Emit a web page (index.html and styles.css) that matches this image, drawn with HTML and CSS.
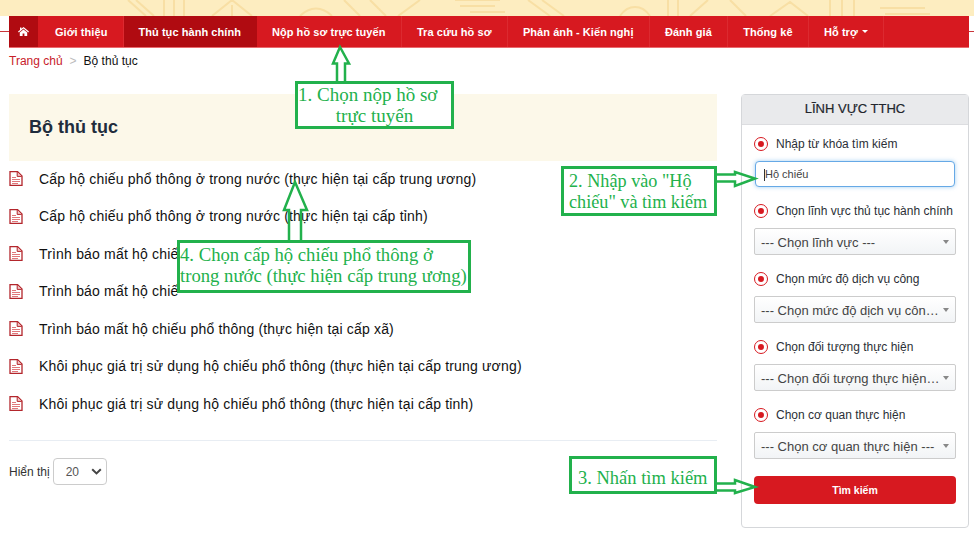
FILE: index.html
```html
<!DOCTYPE html>
<html lang="vi">
    <head>
        <meta charset="utf-8"/>
        <title>Bộ thủ tục</title>
        <link rel="stylesheet" href="styles.css">
    </head>
    <body>
        <svg class="defs" width="0" height="0">
            <symbol id="file-icon" viewBox="0 0 14 15">
                <path d="M1 .7H8.6L13 5V14.3H1Z" fill="#fff" stroke="#b3262c" stroke-width="1.3"/>
                <path d="M8.2 1V5.4H12.8" fill="#f3c4c6" stroke="#b3262c" stroke-width="1"/>
                <path d="M3 6.5H7M3 8.5H11M3 10.5H11M3 12.5H9" stroke="#e0777b" stroke-width="1.1"/>
            </symbol>
        </svg>

        <div class="banner">
            <svg class="banner-art" width="974" height="16" viewBox="0 0 974 16">
                <g fill="none" stroke="#f8dfa4" stroke-width="2">
                    <path d="M128 0L146 16M136 0L154 16M164 0V16M174 0V16M184 0V16M212 16L232 0L252 16M232 5V16"/>
                    <path d="M300 16C310 6 322 6 332 16M344 0L360 16M370 0L386 16M398 16L420 0"/>
                    <path d="M455 0H500M460 6H495M470 12H505M528 0L550 16M542 0L564 16"/>
                    <path d="M620 16C628 4 642 4 650 16M668 0V16M678 0V16M690 16L708 0M730 0L746 16"/>
                    <path d="M770 16L790 2L808 16M830 0V16M842 0V16M854 0V16M880 8H925M885 14H930"/>
                </g>
            </svg>
        </div>

        <div class="nav-wrap">
            <ul class="main-nav">
                <li class="home active">
                    <svg width="11" height="9" viewBox="0 0 11 9"><path d="M5.5 0L11 4.6L10.2 5.4L5.5 1.6L.8 5.4L0 4.6L2 2.9V.6H3.4V1.8ZM1.8 5.4L5.5 2.5L9.2 5.4V9H6.4V6.4H4.6V9H1.8Z" fill="#fff"/></svg>
                </li>
                <li class="wide">Giới thiệu</li>
                <li class="active">Thủ tục hành chính</li>
                <li>Nộp hồ sơ trực tuyến</li>
                <li>Tra cứu hồ sơ</li>
                <li>Phản ánh - Kiến nghị</li>
                <li>Đánh giá</li>
                <li>Thống kê</li>
                <li>Hỗ trợ <span class="caret"></span></li>
            </ul>
        </div>

        <div class="breadcrumb">
            <a>Trang chủ</a>
            <span class="sep">&gt;</span>
            <span>Bộ thủ tục</span>
        </div>

        <div class="page-body">
            <section class="main-col">
                <h1 class="page-title">Bộ thủ tục</h1>
                <ul class="proc-list">
                    <li><svg class="file"><use href="#file-icon"/></svg>Cấp hộ chiếu phổ thông ở trong nước (thực hiện tại cấp trung ương)</li>
                    <li><svg class="file"><use href="#file-icon"/></svg>Cấp hộ chiếu phổ thông ở trong nước (thực hiện tại cấp tỉnh)</li>
                    <li><svg class="file"><use href="#file-icon"/></svg>Trình báo mất hộ chiế</li>
                    <li><svg class="file"><use href="#file-icon"/></svg>Trình báo mất hộ chiế</li>
                    <li><svg class="file"><use href="#file-icon"/></svg>Trình báo mất hộ chiếu phổ thông (thực hiện tại cấp xã)</li>
                    <li><svg class="file"><use href="#file-icon"/></svg>Khôi phục giá trị sử dụng hộ chiếu phổ thông (thực hiện tại cấp trung ương)</li>
                    <li><svg class="file"><use href="#file-icon"/></svg>Khôi phục giá trị sử dụng hộ chiếu phổ thông (thực hiện tại cấp tỉnh)</li>
                </ul>
                <div class="pager">
                    <span>Hiển thị</span>
                    <div class="page-size">
                        20
                        <svg width="11" height="7" viewBox="0 0 11 7"><path d="M1.2 1.2L5.5 5.4L9.8 1.2" fill="none" stroke="#444" stroke-width="2"/></svg>
                    </div>
                </div>
            </section>

            <aside class="filter-card">
                <div class="filter-head">LĨNH VỰC TTHC</div>
                <div class="filter-body">
                    <label class="filter-label"><span class="radio"></span>Nhập từ khóa tìm kiếm</label>
                    <input class="keyword" type="text" value="Hộ chiếu">

                    <label class="filter-label"><span class="radio"></span>Chọn lĩnh vực thủ tục hành chính</label>
                    <div class="select-box"><span>--- Chọn lĩnh vực ---</span><i></i></div>

                    <label class="filter-label"><span class="radio"></span>Chọn mức độ dịch vụ công</label>
                    <div class="select-box"><span>--- Chọn mức độ dịch vụ côn…</span><i></i></div>

                    <label class="filter-label"><span class="radio"></span>Chọn đối tượng thực hiện</label>
                    <div class="select-box"><span>--- Chọn đối tượng thực hiện…</span><i></i></div>

                    <label class="filter-label"><span class="radio"></span>Chọn cơ quan thực hiện</label>
                    <div class="select-box"><span>--- Chọn cơ quan thực hiện ---</span><i></i></div>

                    <button class="search-btn">Tìm kiếm</button>
                </div>
            </aside>
        </div>

        <!-- annotations drawn over the page -->
        <svg class="arrows" width="974" height="534" viewBox="0 0 974 534">
            <g fill="none" stroke="#22b14c" stroke-width="2.5">
                <path d="M337 81V63.500H333L340 47L349 63.500H345V81"/>
                <path d="M289 240V210H284L295 182L307 210H301V240"/>
                <path d="M717 174.500H735V172L755 178.500L735 186V181.500H717"/>
                <path d="M717 483.500H735V480L755 487L735 493V490.500H717"/>
            </g>
        </svg>
        <div class="note note-1">1. Chọn nộp hồ sơ&nbsp;&nbsp;&nbsp;<br>trực tuyến</div>
        <div class="note note-2">2. Nhập vào "Hộ<br>chiếu" và tìm kiếm</div>
        <div class="note note-3">3. Nhấn tìm kiếm</div>
        <div class="note note-4">4. Chọn cấp hộ chiếu phổ thông ở<br>trong nước (thực hiện cấp trung ương)</div>
    </body>
</html>
```

FILE: styles.css
```css
:root {
    --red: #d71920;
    --dark-red: #b00b11;
    --green: #22b14c;
}

html, body {
    margin: 0;
    padding: 0;
    background: #fff;
    font-family: "Liberation Sans", sans-serif;
    color: #111;
}

body {
    position: relative;
    width: 974px;
    height: 534px;
    overflow: hidden;
}

.defs {
    position: absolute;
}

.banner {
    height: 16px;
    background: #fdedc0;
}

.banner-art {
    display: block;
}

.nav-wrap {
    height: 32px;
    padding: 0 5px 0 9px;
    background: linear-gradient(#fff 15px, #c9353a 15px, #c9353a 16px, #fff 16px);
}

.main-nav {
    list-style: none;
    margin: 0;
    padding: 0;
    height: 31px;
    display: flex;
    background: var(--red);
    border-bottom: 1px solid #ea6a6e;
}

.main-nav li {
    display: flex;
    align-items: center;
    gap: 4px;
    padding: 0 15.400px 0 15px;
    color: #fff;
    font-size: 11px;
    font-weight: 700;
    letter-spacing: 0.06px;
    white-space: nowrap;
    border-right: 1px solid #dc2a30;
}

.main-nav li.wide {
    padding: 0 16px 0 17px;
}

.main-nav li.active {
    padding-left: 14px;
    padding-right: 15px;
    background: var(--dark-red);
    border-right-color: var(--dark-red);
}

.main-nav li.home {
    width: 29px;
    box-sizing: border-box;
    padding: 0 0 0 9px;
}

.caret {
    width: 0;
    height: 0;
    border-left: 3px solid transparent;
    border-right: 3px solid transparent;
    border-top: 3px solid #fff;
}

.breadcrumb {
    height: 46px;
    padding: 5px 9px 0;
    box-sizing: border-box;
    font-size: 12px;
    line-height: 16px;
    display: flex;
    gap: 7px;
}

.breadcrumb a {
    color: #c8202a;
}

.breadcrumb .sep {
    color: #bbb;
}

.page-body {
    display: flex;
    align-items: flex-start;
    padding: 0 5px 0 9px;
    gap: 24px;
}

.main-col {
    width: 708px;
}

.page-title {
    margin: 0;
    height: 67px;
    padding: 0 20px;
    box-sizing: border-box;
    background: #fcf8e9;
    color: #1f2d3d;
    font-size: 18px;
    line-height: 67px;
}

.proc-list {
    list-style: none;
    margin: -1px 0 0;
    padding: 0;
    height: 280px;
    border-bottom: 1px solid #e8edf3;
}

.proc-list li {
    display: flex;
    align-items: center;
    height: 37.500px;
    font-size: 14px;
    letter-spacing: 0.18px;
}

.file {
    width: 14px;
    height: 15px;
    margin-right: 16px;
    flex: none;
}

.pager {
    display: flex;
    align-items: center;
    gap: 3px;
    margin-top: 17px;
    font-size: 12px;
    color: #333;
}

.page-size {
    width: 36px;
    height: 25px;
    border: 1px solid #ccc;
    border-radius: 4px;
    display: flex;
    align-items: center;
    justify-content: space-between;
    padding: 0 4px 0 12px;
    color: #555;
}

.filter-card {
    width: 228px;
    height: 434px;
    box-sizing: border-box;
    border: 1px solid #d5d7da;
    border-radius: 4px;
}

.filter-head {
    height: 29px;
    background: #e9eaec;
    border-bottom: 1px solid #dcdde0;
    color: #22262c;
    font-size: 13px;
    line-height: 28px;
    text-align: center;
    -webkit-text-stroke: 0.2px #22262c;
}

.filter-body {
    padding: 10px 12px 0;
    display: flex;
    flex-direction: column;
}

.filter-label {
    display: flex;
    align-items: center;
    gap: 8px;
    height: 18px;
    margin-bottom: 8px;
    font-size: 12px;
    color: #2b2f36;
    white-space: nowrap;
}

.radio {
    width: 14px;
    height: 14px;
    box-sizing: border-box;
    border: 1px solid var(--red);
    border-radius: 50%;
    display: flex;
    align-items: center;
    justify-content: center;
    flex: none;
}

.radio::after {
    content: "";
    width: 6px;
    height: 6px;
    border-radius: 50%;
    background: var(--red);
}

.keyword {
    height: 26px;
    box-sizing: border-box;
    margin: 0 1px 15px 1px;
    width: 200px;
    padding: 0 9px;
    border: 1px solid #66a9e6;
    border-radius: 4px;
    box-shadow: 0 0 4px rgba(102, 175, 233, 0.6);
    background: linear-gradient(#333, #333) 8px 7px / 1px 12px no-repeat #fff;
    font: 11px "Liberation Sans", sans-serif;
    color: #444;
    outline: none;
}

.select-box {
    height: 27px;
    width: 202px;
    box-sizing: border-box;
    margin-bottom: 15px;
    padding: 1px 6px 0;
    border: 1px solid #ccc;
    border-radius: 2px;
    background: linear-gradient(#fff, #f2f4f6);
    display: flex;
    align-items: center;
    gap: 5px;
    font-size: 13px;
    color: #444;
}

.select-box span {
    flex: 1;
    min-width: 0;
    white-space: nowrap;
}

.select-box i {
    flex: none;
    border-left: 3px solid transparent;
    border-right: 3px solid transparent;
    border-top: 4px solid #888;
}

.search-btn {
    height: 28px;
    width: 202px;
    margin-top: 2px;
    border: 0;
    border-radius: 4px;
    background: var(--red);
    color: #fff;
    font: 700 10.500px "Liberation Sans", sans-serif;
}

.arrows {
    position: absolute;
    left: 0;
    top: 0;
    pointer-events: none;
}

.note {
    position: absolute;
    box-sizing: border-box;
    border: 3px solid var(--green);
    background: #fff;
    color: var(--green);
    font-family: "Liberation Serif", serif;
    font-size: 18.500px;
    line-height: 21px;
    white-space: nowrap;
}

.note-1 {
    left: 295px;
    top: 81px;
    width: 159px;
    height: 48px;
    font-size: 19px;
    text-align: center;
}

.note-2 {
    left: 561px;
    top: 166px;
    width: 156px;
    height: 50px;
    font-size: 18.200px;
    padding: 2px 0 0 5px;
}

.note-3 {
    left: 569px;
    top: 456px;
    width: 148px;
    height: 38px;
    padding: 9px 0 0 6px;
}

.note-4 {
    left: 177px;
    top: 240px;
    width: 294px;
    height: 53px;
    font-size: 18.700px;
    padding: 1px 0 0 0;
}
```
